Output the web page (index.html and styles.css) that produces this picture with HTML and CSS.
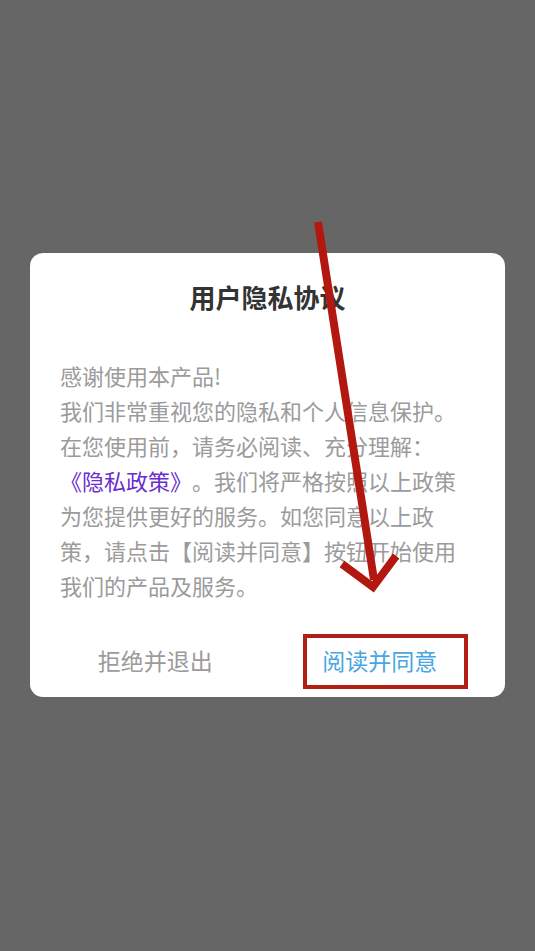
FILE: index.html
```html
<!DOCTYPE html>
<html lang="zh-CN">
<head>
<meta charset="utf-8">
<title>用户隐私协议</title>
<link rel="stylesheet" href="styles.css">
</head>
<body>
<div class="screen">
  <div class="dialog">
    <div class="dialog-title">用户隐私协议</div>
    <div class="dialog-body">感谢使用本产品!<br>我们非常重视您的隐私和个人信息保护。<br>在您使用前，请务必阅读、充分理解：<br><span class="link">《隐私政策》</span>。我们将严格按照以上政策<br>为您提供更好的服务。如您同意以上政<br>策，请点击【阅读并同意】按钮开始使用<br>我们的产品及服务。</div>
    <div class="dialog-actions">
      <div class="btn btn-reject">拒绝并退出</div>
      <div class="btn btn-accept">阅读并同意</div>
    </div>
  </div>
  <svg class="annotation" width="535" height="951" viewBox="0 0 535 951">
    <line x1="318" y1="222" x2="374" y2="580" stroke="#b2180f" stroke-width="8"/>
    <polyline points="342,564 373,587 396,556" fill="none" stroke="#b2180f" stroke-width="8" stroke-linejoin="miter" stroke-miterlimit="10"/>
    <rect x="305" y="636" width="161" height="51" fill="none" stroke="#b01e16" stroke-width="4"/>
  </svg>
</div>
</body>
</html>
```

FILE: styles.css
```css
html, body {
  margin: 0;
  padding: 0;
}
body {
  background: #666666;
  font-family: "Noto Sans CJK SC", "Noto Sans", sans-serif;
}
.screen {
  position: relative;
  width: 535px;
  height: 951px;
  overflow: hidden;
  padding-top: 253px;
  box-sizing: border-box;
}
.dialog {
  margin: 0 30px;
  background: #ffffff;
  border-radius: 13px;
  display: flex;
  flex-direction: column;
}
.dialog-title {
  padding-top: 26px;
  font-size: 26px;
  line-height: 36px;
  font-weight: bold;
  color: #333333;
  text-align: center;
}
.dialog-body {
  margin-top: 43px;
  padding: 0 30px;
  font-size: 22px;
  line-height: 35px;
  color: #9b9b9b;
  white-space: nowrap;
  text-spacing-trim: space-all;
}
.link {
  color: #6a2bcf;
}
.dialog-actions {
  display: flex;
  padding: 37px 13px 17px;
}
.btn {
  flex: 1;
  text-align: center;
  font-size: 23px;
  line-height: 40px;
}
.btn-reject {
  color: #9b9b9b;
}
.btn-accept {
  color: #4aa6e0;
}
.annotation {
  position: absolute;
  left: 0;
  top: 0;
  pointer-events: none;
}
```
